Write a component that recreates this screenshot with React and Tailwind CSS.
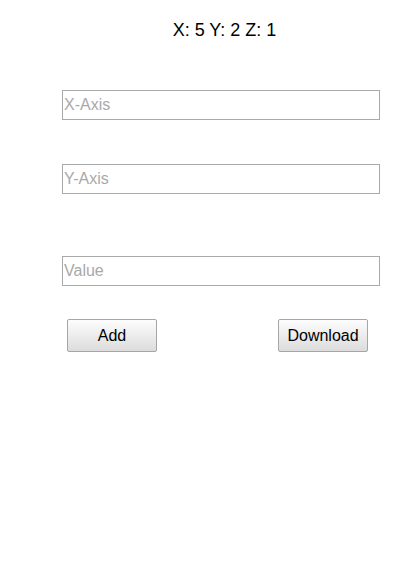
export default function App() {
  return (
    <div className="w-[416px] h-[573px] bg-white font-['Liberation_Sans',Arial,sans-serif]">
      <div className="ml-[62px] w-[318px] pt-[19px] flex flex-col">
        <div className="pl-[7px] text-center text-[18px] leading-[22px] text-black">X: 5 Y: 2 Z: 1</div>
        <input
          placeholder="X-Axis"
          className="mt-[49px] h-[30px] w-full border border-[#a9a9a9] px-px text-[16px] text-black placeholder:text-[#a9a9a9] outline-none"
        />
        <input
          placeholder="Y-Axis"
          className="mt-[44px] h-[30px] w-full border border-[#a9a9a9] px-px text-[16px] text-black placeholder:text-[#a9a9a9] outline-none"
        />
        <input
          placeholder="Value"
          className="mt-[62px] h-[30px] w-full border border-[#a9a9a9] px-px text-[16px] text-black placeholder:text-[#a9a9a9] outline-none"
        />
        <div className="mt-[33px] flex justify-between pl-[5px] pr-[12px]">
          <button className="h-[33px] w-[90px] rounded-[2px] border border-[#a6a6a6] bg-gradient-to-b from-[#fdfdfd] to-[#dcdcdc] text-[16px] text-black">
            Add
          </button>
          <button className="h-[33px] w-[90px] rounded-[2px] border border-[#a6a6a6] bg-gradient-to-b from-[#fdfdfd] to-[#dcdcdc] text-[16px] text-black">
            Download
          </button>
        </div>
      </div>
    </div>
  );
}
